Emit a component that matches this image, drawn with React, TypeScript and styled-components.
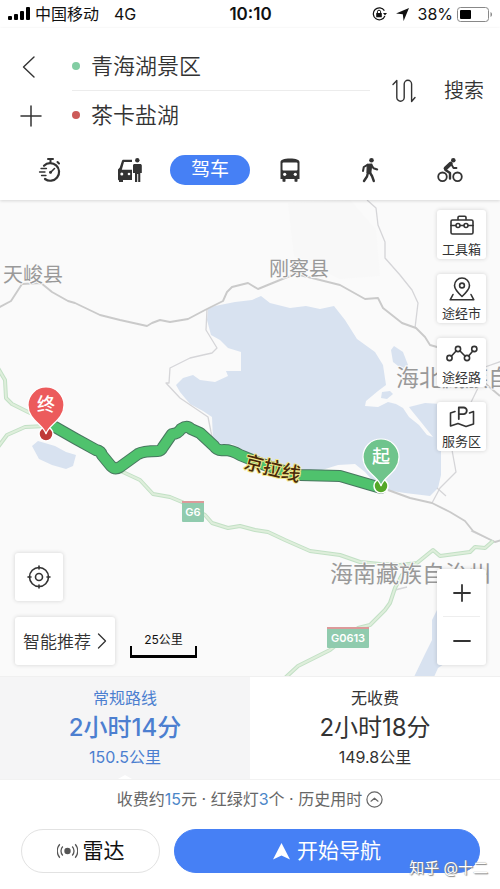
import React, { useState } from 'react';
import styled, { createGlobalStyle, css } from 'styled-components';

const BLUE = '#4680f5';
const INK = '#333333';

const GlobalStyle = createGlobalStyle`
  *, *::before, *::after { box-sizing: border-box; }
  body {
    margin: 0;
    background: #ffffff;
    color: ${INK};
    font-family: Inter, "Noto Sans CJK SC", sans-serif;
  }
  button, input { font: inherit; color: inherit; }
  button { cursor: pointer; border: 0; padding: 0; background: none; }
  svg { display: block; flex: none; }
`;

const Page = styled.main`
  position: relative;
  display: flex;
  flex-direction: column;
  min-height: 100vh;
`;

/* ---------- status bar ---------- */

const StatusBar = styled.div`
  display: grid;
  grid-template-columns: 1fr auto 1fr;
  align-items: center;
  height: 28px;
  padding: 0 7px 0 8px;
  color: #111;
  font-size: 16px;
  line-height: 24px;
`;

const StatusGroup = styled.div<{ $end?: boolean; $gap: number }>`
  display: flex;
  align-items: center;
  gap: ${(p) => p.$gap}px;
  justify-content: ${(p) => (p.$end ? 'flex-end' : 'flex-start')};
`;

const Network = styled.span`
  margin-left: 10px;
`;

const Clock = styled.span`
  font-size: 17px;
  font-weight: 600;
`;

/* ---------- search header ---------- */

const Header = styled.header`
  position: relative;
  z-index: 1;
  background: #fff;
  box-shadow: 0 1px 3px rgba(0, 0, 0, 0.14);
`;

const SearchArea = styled.div`
  display: grid;
  grid-template-columns: 72px 1fr auto auto;
  align-items: center;
  padding: 14px 16px 0 0;
`;

const IconColumn = styled.div`
  display: grid;
  grid-template-rows: 49px 49px;
  padding-left: 20px;
`;

const PlainIconButton = styled.button`
  display: flex;
  align-items: center;
`;

const Stops = styled.div`
  display: grid;
  grid-template-rows: 49px 49px;
  min-width: 0;
`;

const Stop = styled.label<{ $line?: boolean }>`
  display: flex;
  align-items: center;
  gap: 11px;
  min-width: 0;
  border-bottom: 1px solid ${(p) => (p.$line ? '#ececec' : 'transparent')};
`;

const Dot = styled.span<{ $color: string }>`
  flex: none;
  width: 8px;
  height: 8px;
  border-radius: 50%;
  background: ${(p) => p.$color};
`;

const StopInput = styled.input`
  flex: 1;
  min-width: 0;
  width: 100%;
  padding: 0;
  border: 0;
  outline: 0;
  background: transparent;
  font-size: 22px;
  line-height: 32px;
  font-weight: 350;
`;

const SwapButton = styled(PlainIconButton)`
  margin: 0 28px 0 22px;
`;

const SearchButton = styled.button`
  font-size: 20px;
  line-height: 30px;
  font-weight: 350;
  white-space: nowrap;
`;

const Modes = styled.nav`
  display: grid;
  grid-template-columns: repeat(6, 1fr);
  align-items: center;
  height: 60px;
  padding: 0 10px;
`;

const ModeButton = styled.button<{ $active?: boolean }>`
  display: flex;
  align-items: center;
  justify-content: center;
  height: 30px;
  border-radius: 15px;
  ${(p) =>
    p.$active &&
    css`
      background: ${BLUE};
      color: #fff;
      font-size: 19px;
      line-height: 28px;
    `}
`;

/* ---------- map ---------- */

const MapArea = styled.section`
  position: relative;
  display: flex;
  flex: 1;
  justify-content: space-between;
  min-height: 476px;
  padding: 10px 14px 11px 15px;
  background: #fafafa;
  overflow: hidden;
`;

const MapCanvas = styled.svg`
  position: absolute;
  inset: 0;
  width: 100%;
  height: 100%;
`;

const LeftControls = styled.div`
  position: relative;
  display: flex;
  flex-direction: column;
  justify-content: flex-end;
  align-items: flex-start;
  gap: 16px;
`;

const RightControls = styled.div`
  position: relative;
  display: flex;
  flex-direction: column;
  justify-content: space-between;
`;

const ToolStack = styled.div`
  display: flex;
  flex-direction: column;
  gap: 15px;
`;

const card = css`
  background: #fff;
  border-radius: 3px;
  box-shadow: 0 0 4px rgba(0, 0, 0, 0.16);
`;

const Tool = styled.button`
  ${card}
  display: flex;
  flex-direction: column;
  align-items: center;
  justify-content: space-between;
  width: 49px;
  height: 49px;
  padding-top: 3px;
  font-size: 13px;
  line-height: 20px;
  white-space: nowrap;
`;

const LocateButton = styled.button`
  ${card}
  display: flex;
  align-items: center;
  justify-content: center;
  width: 48px;
  height: 48px;
`;

const PreferenceRow = styled.div`
  display: flex;
  align-items: center;
  gap: 15px;
`;

const PreferenceButton = styled.button`
  ${card}
  display: flex;
  align-items: center;
  gap: 6px;
  height: 48px;
  padding: 0 8px;
  font-size: 17px;
  line-height: 24px;
  font-weight: 350;
  font-family: "Noto Sans CJK SC", sans-serif;
`;

const Scale = styled.div`
  width: 67px;
  padding-top: 6px;
  color: #111;
  font-size: 12px;
  line-height: 18px;
  text-align: center;
`;

const ScaleBar = styled.div`
  height: 12px;
  margin-top: -3px;
  border: solid #000;
  border-width: 0 2px 3px;
`;

const ZoomBox = styled.div`
  ${card}
  display: flex;
  flex-direction: column;
  width: 49px;
`;

const ZoomButton = styled.button<{ $line?: boolean }>`
  display: flex;
  align-items: center;
  justify-content: center;
  height: 48px;
  margin: 0 6px;
  border-bottom: ${(p) => (p.$line ? '1px solid #eeeeee' : '0')};
`;

/* ---------- routes ---------- */

const Routes = styled.section`
  display: grid;
  grid-template-columns: 1fr 1fr;
  border-top: 1px solid #f0f0f0;
  border-bottom: 1px solid #f2f2f2;
`;

const Route = styled.button<{ $active: boolean }>`
  position: relative;
  display: flex;
  flex-direction: column;
  align-items: center;
  padding: 9px 0 10px;
  background: ${(p) => (p.$active ? '#f5f5f6' : '#ffffff')};
  color: ${(p) => (p.$active ? '#4c7fd0' : INK)};
  font-size: 16px;
  line-height: 24px;

  ${(p) =>
    p.$active &&
    css`
      &::after {
        content: '';
        position: absolute;
        bottom: 0;
        border: 7px solid transparent;
        border-top: 0;
        border-bottom: 4px solid #fff;
      }
    `}
`;

const Duration = styled.strong<{ $active: boolean }>`
  font-size: 24px;
  line-height: 35px;
  font-weight: ${(p) => (p.$active ? 500 : 400)};
`;

const Summary = styled.button`
  display: flex;
  align-items: center;
  justify-content: center;
  gap: 4px;
  height: 38px;
  color: #666;
  font-size: 16px;
  line-height: 24px;
`;

const Accent = styled.span`
  color: #4b86c8;
`;

const Actions = styled.footer`
  display: grid;
  grid-template-columns: 139fr 306fr;
  gap: 14px;
  padding: 11px 20px 16px 21px;
`;

const Action = styled.button<{ $primary?: boolean }>`
  display: flex;
  align-items: center;
  justify-content: center;
  gap: ${(p) => (p.$primary ? 7 : 5)}px;
  height: 44px;
  border: 1px solid ${(p) => (p.$primary ? BLUE : '#e2e2e2')};
  border-radius: 22px;
  background: ${(p) => (p.$primary ? BLUE : '#ffffff')};
  color: ${(p) => (p.$primary ? '#ffffff' : '#111111')};
  font-size: 21px;
  line-height: 30px;
`;

const Watermark = styled.div`
  position: absolute;
  right: 12px;
  bottom: 9px;
  color: #fff;
  font-size: 15px;
  line-height: 24px;
  text-shadow: 0 0 1px #777, 1px 1px 1px #888;
  pointer-events: none;
`;

/* ---------- icons ---------- */

const line = {
  fill: 'none',
  stroke: 'currentColor',
  strokeLinecap: 'round' as const,
  strokeLinejoin: 'round' as const,
};

const SignalIcon = () => (
  <svg width="22" height="14" viewBox="0 0 22 14" fill="#000">
    <rect x="0" y="9" width="4" height="4" rx="1" />
    <rect x="6" y="7" width="4" height="6" rx="1" />
    <rect x="12" y="4" width="4" height="9" rx="1" />
    <rect x="18" y="0" width="4" height="13" rx="1" />
  </svg>
);

const LockIcon = () => (
  <svg width="15" height="14" viewBox="0 0 15 14">
    <path d="M12.4 3.6A6 6 0 1 0 12.9 9" fill="none" stroke="#111" strokeWidth="1.2" />
    <path d="M11 6h4l-2 2.6z" fill="#111" />
    <rect x="4.2" y="6" width="5.6" height="4.2" rx=".5" fill="#111" />
    <path d="M5.4 6V4.8a1.6 1.6 0 0 1 3.2 0V6" fill="none" stroke="#111" strokeWidth="1" />
  </svg>
);

const LocationIcon = () => (
  <svg width="13" height="13" viewBox="0 0 13 13" fill="#111">
    <path d="M13 0L7.6 13 6.8 6.2 0 5.6z" />
  </svg>
);

const BatteryIcon = () => (
  <svg width="36" height="15" viewBox="0 0 36 15">
    <rect x=".5" y=".5" width="31" height="14" rx="3" fill="#fff" stroke="#888" />
    <rect x="3" y="3" width="11" height="9" rx="1" fill="#000" />
    <path d="M33.5 5v5c2-.8 2-4.200 0-5z" fill="#888" />
  </svg>
);

const BackIcon = () => (
  <svg width="16" height="24" viewBox="0 0 16 24" {...line} strokeWidth="1.4">
    <path d="M14 2L3.500 12 14 22" />
  </svg>
);

const AddIcon = () => (
  <svg width="22" height="22" viewBox="0 0 22 22" {...line} strokeWidth="1.5">
    <path d="M1 11h20M11 1v20" />
  </svg>
);

const SwapIcon = () => (
  <svg width="24" height="24" viewBox="0 0 24 24" {...line} strokeWidth="1.4">
    <path d="M1 5.500L4.800 1.500V18.500a3.700 3.700 0 0 0 7.400 0V5a3.700 3.700 0 0 1 7.400 0V22.500L23 18.500" />
  </svg>
);

const TimerIcon = () => (
  <svg width="24" height="26" viewBox="0 0 24 26" {...line}>
    <path d="M6 8.800A8.800 8.800 0 1 1 7 22" strokeWidth="2.2" />
    <path d="M10 2h5M12.500 2v3M19.500 5l1.500 1.500" strokeWidth="2" />
    <path d="M3 11.500h5.500M1.500 15h5.500M3.500 18.500h4.500" strokeWidth="1.300" />
    <path d="M12.500 15.500L16.500 11.500" strokeWidth="1.600" />
    <circle cx="12.500" cy="15.300" r="1.500" fill="currentColor" stroke="none" />
  </svg>
);

const TaxiIcon = () => (
  <svg width="24" height="26" viewBox="0 0 24 26" fill="currentColor">
    <path d="M14 2.800H5.500c-.8 0-1.300.5-1.600 1.200L1.800 10.500 0 12.500V22c0 .9.300 1.300 1 1.300V25h4v-2h9V12.800H3.800L6 5h8z" />
    <circle cx="3.800" cy="17" r="1.500" fill="#fff" />
    <circle cx="11" cy="17" r="1.300" fill="#fff" />
    <path d="M15 8.500c0-.9.600-1.500 1.500-1.500h5.600c1 0 1.700.7 1.700 1.600V16h-1.500v9h-2.100v-8h-1v8H17v-9h-2z" />
    <circle cx="19.300" cy="3.300" r="2.200" />
  </svg>
);

const BusIcon = () => (
  <svg width="20" height="26" viewBox="0 0 20 26">
    <path
      d="M.5 5C.5 2.800 4 1.500 10 1.500S19.500 2.800 19.500 5v17h-2v2.300c0 .8-3 .8-3 0V22h-9v2.300c0 .8-3 .8-3 0V22h-2z"
      fill="currentColor"
    />
    <rect x="2.500" y="5.500" width="15" height="8" rx="1" fill="#fff" />
    <circle cx="4.700" cy="17.300" r="1.600" fill="#fff" />
    <circle cx="15.300" cy="17.300" r="1.600" fill="#fff" />
  </svg>
);

const WalkIcon = () => (
  <svg width="18" height="26" viewBox="0 0 18 26" {...line}>
    <circle cx="10.500" cy="3.200" r="2.300" fill="currentColor" stroke="none" />
    <path d="M6.300 7.300L10.800 7 9.800 15.500H6z" fill="currentColor" strokeWidth="1.200" />
    <path d="M6.500 7.800L2.800 10 2 14M10.500 8l2 3.300 3.700 1.200" strokeWidth="2" />
    <path d="M7 15.500L6 19.500 3 24M8.800 15.500L11 19l1.800 5" strokeWidth="2.400" />
  </svg>
);

const BikeIcon = () => (
  <svg width="26" height="26" viewBox="0 0 26 26" {...line}>
    <circle cx="5.500" cy="19.800" r="4.300" strokeWidth="1.800" />
    <circle cx="20.500" cy="19.800" r="4.300" strokeWidth="1.800" />
    <circle cx="16.300" cy="3.200" r="2.300" fill="currentColor" stroke="none" />
    <path d="M13.800 6.500L8.500 11.500" strokeWidth="3.800" />
    <path d="M8.500 13L13 16v5.500" strokeWidth="2.400" />
    <path d="M14.500 7.500L16.500 11h3" strokeWidth="1.800" />
  </svg>
);

const ToolboxIcon = () => (
  <svg width="26" height="24" viewBox="0 0 26 24" {...line} strokeWidth="1.600">
    <rect x="2" y="7" width="22" height="14" rx="1.500" />
    <path d="M9 6.500V4.500c0-.8.400-1.200 1.200-1.200h5.600c.8 0 1.200.4 1.200 1.200v2M2 12.500h4.500M11.500 12.500h3M19.500 12.500H24" />
    <circle cx="9" cy="12.500" r="2" />
    <circle cx="17" cy="12.500" r="2" />
  </svg>
);

const CityIcon = () => (
  <svg width="26" height="24" viewBox="0 0 26 24" {...line} strokeWidth="1.600">
    <path d="M13 19.500C8 14.800 5.500 12 5.500 8.500a7.500 7.500 0 0 1 15 0c0 3.500-2.500 6.300-7.500 11z" />
    <circle cx="13" cy="8.500" r="2.400" />
    <path d="M4 17.500L1.200 22.800h23.600L22 17.500" />
  </svg>
);

const RoadIcon = () => (
  <svg width="32" height="24" viewBox="0 0 32 24" {...line} strokeWidth="1.600">
    <circle cx="3.500" cy="17" r="2.600" />
    <circle cx="12" cy="8" r="2.600" />
    <circle cx="21" cy="17" r="2.600" />
    <circle cx="28.300" cy="8" r="2.600" />
    <path d="M5.300 15.200l5-5.400M13.800 9.800l5.400 5.400M22.600 14.900l4.200-4.900" />
  </svg>
);

const ServiceIcon = () => (
  <svg width="26" height="24" viewBox="0 0 26 24" {...line} strokeWidth="1.600">
    <path d="M6 6.500L1.500 8v13l7.500-2.500 8 3 7.500-2.500V6.500L20.500 8" />
    <path d="M9.800 14V2.500h4.700a3.300 3.300 0 0 1 0 6.600H9.800" strokeWidth="1.800" />
  </svg>
);

const TargetIcon = () => (
  <svg width="24" height="24" viewBox="0 0 24 24" {...line} strokeWidth="1.600">
    <circle cx="12" cy="12" r="9.500" />
    <circle cx="12" cy="12" r="3.500" />
    <path d="M12 1v3M12 20v3M1 12h3M20 12h3" />
  </svg>
);

const ChevronIcon = () => (
  <svg width="10" height="18" viewBox="0 0 10 18" {...line} strokeWidth="1.300">
    <path d="M1.500 2L8.500 9l-7 7" />
  </svg>
);

const PlusIcon = () => (
  <svg width="18" height="18" viewBox="0 0 18 18" {...line} strokeWidth="1.800">
    <path d="M1 9h16M9 1v16" />
  </svg>
);

const MinusIcon = () => (
  <svg width="18" height="18" viewBox="0 0 18 18" {...line} strokeWidth="1.800">
    <path d="M1 9h16" />
  </svg>
);

const CollapseIcon = () => (
  <svg width="17" height="17" viewBox="0 0 17 17" {...line} strokeWidth="1.200">
    <circle cx="8.500" cy="8.500" r="7.600" />
    <path d="M5 10.200l3.500-3 3.500 3" />
  </svg>
);

const RadarIcon = () => (
  <svg width="21" height="16" viewBox="0 0 21 16" fill="none" stroke="#555" strokeWidth="1.300">
    <circle cx="10.500" cy="8" r="3.200" fill="#555" stroke="none" />
    <path d="M5.800 3.500a6.500 6.500 0 0 0 0 9M15.200 3.500a6.500 6.500 0 0 1 0 9M2.800 1.300a10 10 0 0 0 0 13.400M18.200 1.300a10 10 0 0 1 0 13.400" />
  </svg>
);

const NavigateIcon = () => (
  <svg width="17" height="17" viewBox="0 0 17 17" fill="#fff">
    <path d="M8.500 0L17 16.500l-8.500-4-8.500 4z" />
  </svg>
);

/* ---------- map drawing ---------- */

const EXPRESSWAYS = [
  'M-2 368L5 380L6 398L12 404L28 412L45 420',
  'M-2 447L7 435L25 427L46 426',
  'M115 469L125 473L140 480L153 494L170 497L182 502L205 515L212 523L228 528L240 526L255 530L268 532L285 540L310 551L340 555L360 562L380 564L400 565L417 563L433 550L440 556L470 552L475 547L485 548L493 541',
  'M417 563L402 575L395 588L390 603L385 610L370 625L358 628L330 650L298 666L285 678',
];

const ROADS = [
  'M-2 308L11 301L22 284L41 283L52 292L68 301L75 303L100 315L120 320L147 326L152 323L160 320L170 322L188 319L205 310L223 301L227 292L232 287L248 283L258 289L280 280L295 274L308 277L340 285L365 299L378 298L383 308L402 323L416 328L425 337L430 345L437 347L460 362L500 396',
  'M388 490L410 498L432 503L450 512L465 521L473 531L495 542L502 540',
];

const LANES = [
  'M367 200L376 208L378 225L385 242L385 258L400 275L412 290L418 303L415 328',
  'M207 309L206 330L217 348L212 353L203 355L190 358L170 368L169 383L166 383L180 398L208 417L211 432L214 445',
  'M432 503L440 488L456 472L452 450L460 425L477 390L485 367L502 361',
  'M437 488L446 496M395 590L407 587',
  'M471 531L495 542',
];

const ROUTE =
  'M55 427L76 439L96 450Q101 451 102 455L111 466Q115 470 120 467L138 454Q143 451 158 451Q161 451 163 447L172 434Q178 434 181 429Q187 425 191 429L200 433L214 446Q217 451 224 450Q232 450 240 455L262 464L290 473L300 475L340 476L381 488';

const LAKE =
  'M208 309L215 306L235 302L252 300L261 296L270 303L290 308L306 306L320 309L334 306L345 320L357 339L375 352L383 365L386 385L378 391L366 401L365 406L378 407L388 402L396 404L403 408L409 417L419 425L427 435L433 437L421 422L412 411L409 407L425 403L441 404L441 475L438 488L430 496L405 493L380 489L365 472L355 464L338 465L322 470L296 474L262 464L240 448L232 444L222 448L213 441L212 417L203 411L190 404L180 392L176 385L183 378L193 375L200 380L215 382L228 376L226 371L241 371L241 352L228 348L220 340L211 335L207 320Z';

const PinShape = ({ x, y, color, dot, name }: { x: number; y: number; color: string; dot: string; name: string }) => (
  <g transform={`translate(${x} ${y})`}>
    <circle cx="0" cy="29" r="7" fill={dot} stroke="#fff" strokeWidth="1.500" />
    <path
      d="M0 29C-2 20-18 15-18 0A18 18 0 0 1 18 0C18 15 2 20 0 29Z"
      fill={color}
      stroke="#fff"
      strokeWidth="1.200"
    />
    <text y="6" textAnchor="middle" fontSize="18" fontWeight="500" fill="#fff">
      {name}
    </text>
  </g>
);

const RoadShield = ({ x, y, width, name }: { x: number; y: number; width: number; name: string }) => (
  <g transform={`translate(${x} ${y})`}>
    <rect width={width} height="21" rx="1" fill="#90cbae" />
    <rect width={width} height="2" fill="#dc9a9a" />
    <text x={width / 2} y="15" textAnchor="middle" fontSize="11" fontWeight="600" fill="#fff">
      {name}
    </text>
  </g>
);

const RouteMap = () => (
  <MapCanvas viewBox="0 200 500 476" preserveAspectRatio="xMidYMid slice" role="img" aria-label="路线地图">
    <path d="M288 203L350 200L376 230L380 276L340 279L294 256Z" fill="#f8f8f8" />
    <g fill="#d8e2f0">
      <path d={LAKE} />
      <path d="M391 350L394 346L403 352L408 365L402 369L393 362Z" />
      <path d="M382 392L390 391L393 394L387 399L381 398Z" />
      <path d="M32 446L38 441L55 446L66 452L76 455L73 466L66 469L52 465L39 459Z" />
      <path d="M438 608L432 620L432 640L425 654L414 677H434L438 668L450 660V608Z" />
    </g>
    <g fill="none" strokeLinejoin="round">
      {LANES.map((d) => <path key={d} d={d} stroke="#d5d5d8" strokeWidth="1.300" />)}
      {ROADS.map((d) => <path key={d} d={d} stroke="#cacaca" strokeWidth="1.900" />)}
      {EXPRESSWAYS.map((d) => (
        <g key={d}>
          <path d={d} stroke="#c2e0c5" strokeWidth="4" />
          <path d={d} stroke="#deeedb" strokeWidth="2" />
        </g>
      ))}
    </g>
    <g fill="#999" stroke="#fafafa" strokeWidth="2" paintOrder="stroke">
      <text x="3" y="282" fontSize="20">天峻县</text>
      <text x="269" y="276" fontSize="20">刚察县</text>
      <text x="396" y="386" fontSize="23">海北藏族自治州</text>
      <text x="330" y="582" fontSize="23">海南藏族自治州</text>
    </g>
    <RoadShield x={182} y={501} width={22} name="G6" />
    <RoadShield x={327} y={627} width={42} name="G0613" />
    <g fill="none" strokeLinejoin="round" strokeLinecap="round">
      <path d={ROUTE} stroke="#48775f" strokeWidth="12" />
      <path d={ROUTE} stroke="#4fc26d" strokeWidth="10" />
    </g>
    <text
      transform="translate(271 475) rotate(14)"
      textAnchor="middle"
      fontSize="19"
      fontWeight="500"
      fill="#4a2a08"
      stroke="#f0e68c"
      strokeWidth="2"
      strokeLinejoin="round"
      paintOrder="stroke"
    >
      京拉线
    </text>
    <PinShape x={46} y={405} color="#ec5b5c" dot="#bf3a38" name="终" />
    <PinShape x={381} y={457} color="#6fc48c" dot="#54a827" name="起" />
  </MapCanvas>
);

/* ---------- page ---------- */

const TOOLS = [
  { name: '工具箱', icon: <ToolboxIcon /> },
  { name: '途经市', icon: <CityIcon /> },
  { name: '途经路', icon: <RoadIcon /> },
  { name: '服务区', icon: <ServiceIcon /> },
];

const ROUTES = [
  { name: '常规路线', time: '2小时14分', distance: '150.5公里' },
  { name: '无收费', time: '2小时18分', distance: '149.8公里' },
];

export default function App() {
  const [selected, setSelected] = useState(0);

  return (
    <>
      <GlobalStyle />
      <Page>
        <StatusBar>
          <StatusGroup $gap={5}>
            <SignalIcon />
            <span>中国移动</span>
            <Network>4G</Network>
          </StatusGroup>
          <Clock>10:10</Clock>
          <StatusGroup $end $gap={4}>
            <StatusGroup $gap={9}>
              <LockIcon />
              <LocationIcon />
              <span>38%</span>
            </StatusGroup>
            <BatteryIcon />
          </StatusGroup>
        </StatusBar>

        <Header>
          <SearchArea>
            <IconColumn>
              <PlainIconButton aria-label="返回"><BackIcon /></PlainIconButton>
              <PlainIconButton aria-label="添加途经点"><AddIcon /></PlainIconButton>
            </IconColumn>
            <Stops>
              <Stop $line>
                <Dot $color="#82cda3" />
                <StopInput aria-label="起点" defaultValue="青海湖景区" />
              </Stop>
              <Stop>
                <Dot $color="#cc5a58" />
                <StopInput aria-label="终点" defaultValue="茶卡盐湖" />
              </Stop>
            </Stops>
            <SwapButton aria-label="交换起终点"><SwapIcon /></SwapButton>
            <SearchButton>搜索</SearchButton>
          </SearchArea>
          <Modes aria-label="出行方式">
            <ModeButton aria-label="智能出行"><TimerIcon /></ModeButton>
            <ModeButton aria-label="打车"><TaxiIcon /></ModeButton>
            <ModeButton $active>驾车</ModeButton>
            <ModeButton aria-label="公交"><BusIcon /></ModeButton>
            <ModeButton aria-label="步行"><WalkIcon /></ModeButton>
            <ModeButton aria-label="骑行"><BikeIcon /></ModeButton>
          </Modes>
        </Header>

        <MapArea>
          <RouteMap />
          <LeftControls>
            <LocateButton aria-label="定位"><TargetIcon /></LocateButton>
            <PreferenceRow>
              <PreferenceButton>
                智能推荐
                <ChevronIcon />
              </PreferenceButton>
              <Scale>
                25公里
                <ScaleBar />
              </Scale>
            </PreferenceRow>
          </LeftControls>
          <RightControls>
            <ToolStack>
              {TOOLS.map((tool) => (
                <Tool key={tool.name}>
                  {tool.icon}
                  {tool.name}
                </Tool>
              ))}
            </ToolStack>
            <ZoomBox>
              <ZoomButton $line aria-label="放大"><PlusIcon /></ZoomButton>
              <ZoomButton aria-label="缩小"><MinusIcon /></ZoomButton>
            </ZoomBox>
          </RightControls>
        </MapArea>

        <Routes>
          {ROUTES.map((route, index) => (
            <Route
              key={route.name}
              $active={index === selected}
              aria-pressed={index === selected}
              onClick={() => setSelected(index)}
            >
              <span>{route.name}</span>
              <Duration $active={index === selected}>{route.time}</Duration>
              <span>{route.distance}</span>
            </Route>
          ))}
        </Routes>

        <Summary>
          <span>
            收费约<Accent>15</Accent>元 · 红绿灯<Accent>3</Accent>个 · 历史用时
          </span>
          <CollapseIcon />
        </Summary>

        <Actions>
          <Action><RadarIcon />雷达</Action>
          <Action $primary><NavigateIcon />开始导航</Action>
        </Actions>
        <Watermark>知乎 @十二</Watermark>
      </Page>
    </>
  );
}
